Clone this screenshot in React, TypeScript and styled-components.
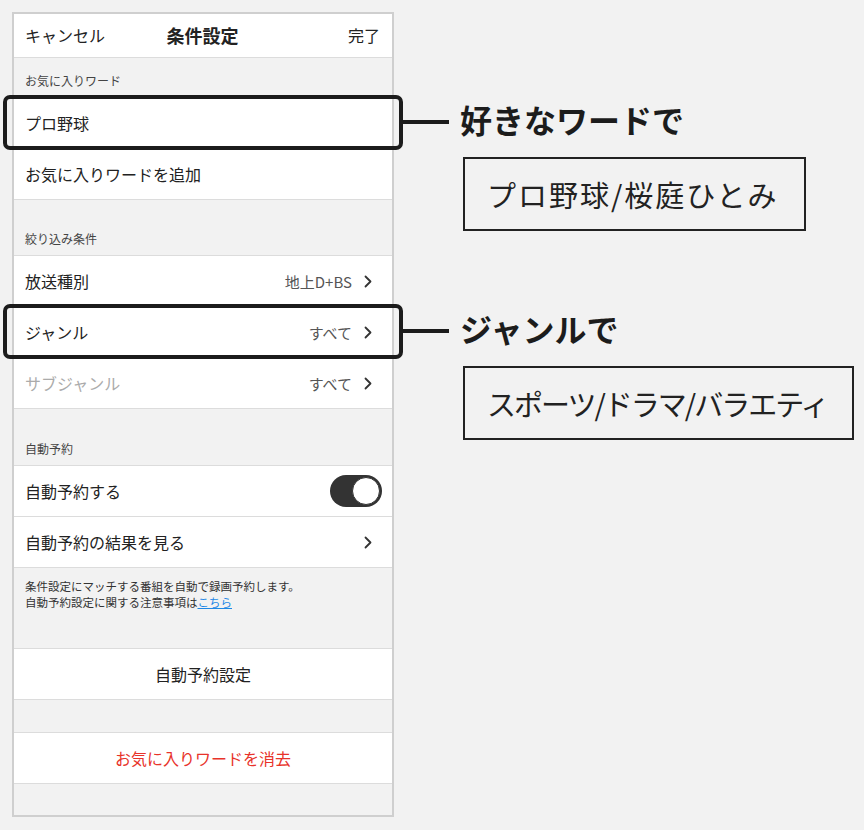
import React from "react";
import styled, { createGlobalStyle } from "styled-components";

const GlobalStyle = createGlobalStyle`
  html, body {
    margin: 0;
    padding: 0;
    background: #f2f2f2;
  }
  body {
    font-family: "Noto Sans CJK JP", "Noto Sans", "Liberation Sans", sans-serif;
    color: #222;
  }
`;

const Page = styled.div`
  padding: 12px;
  min-height: 830px;
  box-sizing: border-box;
`;

const Frame = styled.div`
  width: 382px;
  border: 2px solid #cfcfcf;
  background: #f2f2f2;
  box-sizing: border-box;
`;

const Header = styled.header`
  height: 44px;
  box-sizing: border-box;
  border-bottom: 1px solid #dcdcdc;
  background: #fff;
  display: grid;
  grid-template-columns: 1fr auto 1fr;
  align-items: center;
  padding: 0 12px 2px 11px;
`;

const HeaderAction = styled.span<{ $align: "left" | "right" }>`
  font-size: 16px;
  color: #222;
  justify-self: ${(p) => (p.$align === "left" ? "start" : "end")};
`;

const Title = styled.h1`
  margin: 0;
  font-size: 18px;
  font-weight: 700;
  color: #222;
`;

const SectionLabel = styled.div<{ $h: number }>`
  height: ${(p) => p.$h}px;
  box-sizing: border-box;
  display: flex;
  align-items: flex-end;
  padding: 0 11px 8px;
  font-size: 12px;
  line-height: 16px;
  color: #444;
`;

const Group = styled.div`
  background: #fff;
  border-top: 1px solid #dcdcdc;
`;

const RowBox = styled.div<{ $muted?: boolean; $tight?: boolean }>`
  position: relative;
  height: 51px;
  box-sizing: border-box;
  border-bottom: 1px solid #dcdcdc;
  display: flex;
  align-items: center;
  padding: 0 ${(p) => (p.$tight ? 10 : 20)}px 0 11px;
  font-size: 16px;
  color: ${(p) => (p.$muted ? "#ababab" : "#222")};
`;

const RowValue = styled.span`
  margin-left: auto;
  margin-right: 12px;
  font-size: 15px;
  color: #555;
`;

const ChevronIcon = styled.svg`
  margin-left: auto;
  flex: none;
  ${RowValue} + & {
    margin-left: 0;
  }
`;

const Highlight = styled.div`
  position: absolute;
  left: -11px;
  right: -11px;
  top: -3px;
  bottom: -2px;
  border: 4px solid #1c1c1c;
  border-radius: 7px;
  pointer-events: none;
`;

const Connector = styled.div`
  position: absolute;
  left: calc(100% + 11px);
  top: 50%;
  width: 46px;
  height: 4px;
  margin-top: -3px;
  background: #1c1c1c;
`;

const Callout = styled.div`
  position: absolute;
  left: calc(100% + 68px);
  top: 50%;
  margin-top: -24px;
  display: flex;
  flex-direction: column;
  align-items: flex-start;
  gap: 18px;
`;

const CalloutLabel = styled.div`
  font-size: 32px;
  line-height: 40px;
  font-weight: 700;
  color: #1c1c1c;
  white-space: nowrap;
`;

const CalloutExample = styled.div<{ $spacing: number }>`
  height: 74px;
  box-sizing: border-box;
  margin-left: 3px;
  display: flex;
  align-items: center;
  padding: 0 25px 0 22px;
  border: 2px solid #222;
  font-size: 29px;
  letter-spacing: ${(p) => p.$spacing}px;
  color: #222;
  white-space: nowrap;
`;

const Toggle = styled.div<{ $on: boolean }>`
  margin-left: auto;
  width: 52px;
  height: 32px;
  border-radius: 16px;
  background: ${(p) => (p.$on ? "#333" : "#ddd")};
  display: flex;
  align-items: center;
  justify-content: ${(p) => (p.$on ? "flex-end" : "flex-start")};
  padding: 2px;
  box-sizing: border-box;
`;

const Knob = styled.div`
  width: 28px;
  height: 28px;
  border-radius: 50%;
  background: #fff;
  border: 1px solid #333;
  box-sizing: border-box;
`;

const Note = styled.div`
  height: 80px;
  box-sizing: border-box;
  padding: 10px 11px 0;
  font-size: 11.5px;
  line-height: 16px;
  color: #333;
`;

const NoteLink = styled.a`
  color: #1e88e5;
  text-decoration: underline;
`;

const ActionButton = styled.div<{ $danger?: boolean }>`
  height: 52px;
  box-sizing: border-box;
  background: #fff;
  border-top: 1px solid #dcdcdc;
  border-bottom: 1px solid #dcdcdc;
  display: flex;
  align-items: center;
  justify-content: center;
  font-size: 16px;
  color: ${(p) => (p.$danger ? "#e8332a" : "#222")};
`;

const Spacer = styled.div<{ $h: number }>`
  height: ${(p) => p.$h}px;
`;

const Chevron = () => (
  <ChevronIcon width="8" height="13" viewBox="0 0 8 13">
    <path d="M1.5 1.5 L6.5 6.5 L1.5 11.5" fill="none" stroke="#333" strokeWidth="1.8" strokeLinecap="round" strokeLinejoin="round" />
  </ChevronIcon>
);

type RowProps = {
  label: string;
  value?: string;
  chevron?: boolean;
  muted?: boolean;
  callout?: { label: string; example: string; spacing: number };
};

const Row = ({ label, value, chevron, muted, callout }: RowProps) => (
  <RowBox $muted={muted}>
    <span>{label}</span>
    {value && <RowValue>{value}</RowValue>}
    {chevron && <Chevron />}
    {callout && (
      <>
        <Highlight />
        <Connector />
        <Callout>
          <CalloutLabel>{callout.label}</CalloutLabel>
          <CalloutExample $spacing={callout.spacing}>{callout.example}</CalloutExample>
        </Callout>
      </>
    )}
  </RowBox>
);

export default function App() {
  return (
    <>
      <GlobalStyle />
      <Page>
        <Frame>
          <Header>
            <HeaderAction $align="left">キャンセル</HeaderAction>
            <Title>条件設定</Title>
            <HeaderAction $align="right">完了</HeaderAction>
          </Header>

          <SectionLabel $h={39}>お気に入りワード</SectionLabel>
          <Group>
            <Row
              label="プロ野球"
              callout={{ label: "好きなワードで", example: "プロ野球/桜庭ひとみ", spacing: 2 }}
            />
            <Row label="お気に入りワードを追加" />
          </Group>

          <SectionLabel $h={55}>絞り込み条件</SectionLabel>
          <Group>
            <Row label="放送種別" value="地上D+BS" chevron />
            <Row
              label="ジャンル"
              value="すべて"
              chevron
              callout={{ label: "ジャンルで", example: "スポーツ/ドラマ/バラエティ", spacing: -2 }}
            />
            <Row label="サブジャンル" value="すべて" chevron muted />
          </Group>

          <SectionLabel $h={56}>自動予約</SectionLabel>
          <Group>
            <RowBox $tight>
              <span>自動予約する</span>
              <Toggle $on>
                <Knob />
              </Toggle>
            </RowBox>
            <Row label="自動予約の結果を見る" chevron />
          </Group>

          <Note>
            条件設定にマッチする番組を自動で録画予約します。
            <br />
            自動予約設定に関する注意事項は<NoteLink>こちら</NoteLink>
          </Note>

          <ActionButton>自動予約設定</ActionButton>
          <Spacer $h={32} />
          <ActionButton $danger>お気に入りワードを消去</ActionButton>
          <Spacer $h={31} />
        </Frame>
      </Page>
    </>
  );
}
